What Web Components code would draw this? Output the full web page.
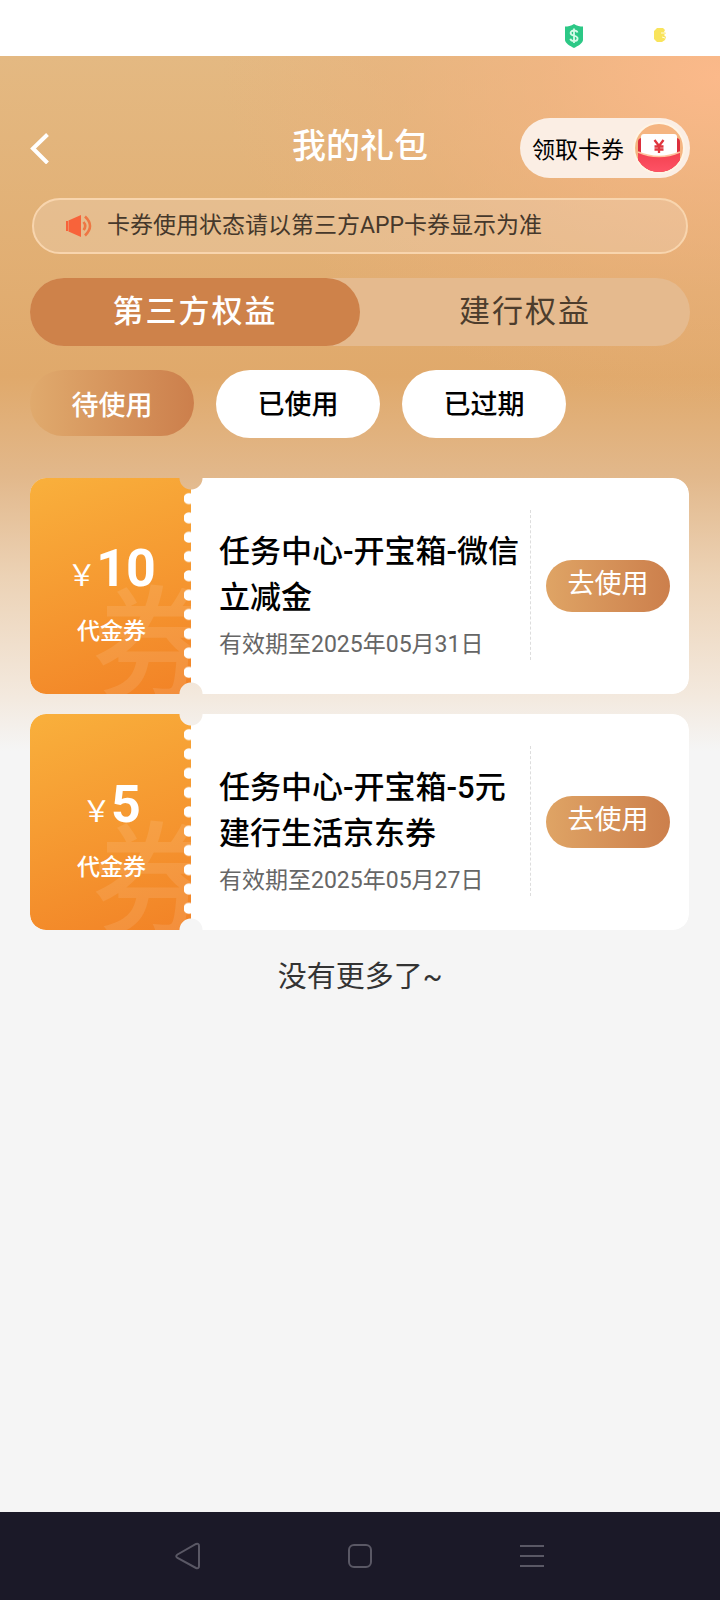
<!DOCTYPE html>
<html lang="zh-CN">
<head>
<meta charset="utf-8">
<meta name="viewport" content="width=device-width, initial-scale=1">
<title>我的礼包</title>
<style>
html, body { margin: 0; }
body { font-family: Roboto, "Noto Sans CJK SC", sans-serif; font-size: 23px; color: #000; background: #f5f5f5; }
</style>
</head>
<body>
<gift-page></gift-page>
<script>
class Base extends HTMLElement {
  connectedCallback() {
    if (this.shadowRoot) return;
    this.attachShadow({ mode: 'open' }).innerHTML =
      '<style>*{box-sizing:border-box}button{font:inherit;color:inherit;border:0;margin:0;padding:0;background:none;cursor:pointer}svg{display:block}</style>' + this.render();
  }
}

customElements.define('status-bar', class extends Base {
  render() { return `
    <style>
      :host { display: flex; justify-content: flex-end; align-items: flex-end; height: 56px; gap: 70px; padding: 0 54px 8px 0; background: #fff; box-sizing: border-box; }
      .bat { margin-bottom: 6px; }
    </style>
    <svg width="20" height="24" viewBox="0 0 20 24" aria-hidden="true"><path d="M10 0C7 2 4 2.500 1 2.500V16c0 3 5 6 9 8 4-2 9-5 9-8V2.500C16 2.500 13 2 10 0z" fill="#2cc886"/><path d="M13.500 8.500c-.5-1.500-1.800-2-3.500-2-2 0-3.400.9-3.400 2.600 0 3.600 7 1.700 7 5.300 0 1.700-1.500 2.600-3.600 2.600-1.900 0-3.300-.7-3.700-2.300M10 4.500v14.500" fill="none" stroke="#d6fbe8" stroke-width="1.800"/></svg>
    <svg class="bat" width="12" height="14" viewBox="0 0 12 14" aria-hidden="true"><path d="M3 0h6l2 2-1 2 2 1-2 2 2 2-1 3-3 2H3L0 11V3z" fill="#f9e45c"/><path d="M7 5h4M8 9l3 1" stroke="#fffbe0" stroke-width="1"/></svg>`; }
});

customElements.define('page-header', class extends Base {
  render() { return `
    <style>
      :host { display: grid; grid-template-columns: 1fr auto 1fr; align-items: center; height: 60px; }
      .back { width: 20px; height: 32px; justify-self: start; }
      h1 { margin: 0 0 4px; font-size: 34px; line-height: 44px; font-weight: 500; color: #fff; }
      .claim { justify-self: end; display: flex; align-items: center; justify-content: space-between; width: 170px; height: 60px; padding: 0 5px 0 12px; border-radius: 30px; background: #fbeee4; font-size: 23px; color: #000; }
    </style>
    <button class="back" aria-label="返回"><svg width="20" height="32" viewBox="0 0 20 32"><path d="M17.500 2.500 3 16.500 17.500 31" fill="none" stroke="#fff" stroke-width="4"/></svg></button>
    <h1>我的礼包</h1>
    <button class="claim"><span>领取卡券</span>
      <svg width="52" height="52" viewBox="0 0 52 52" aria-hidden="true">
        <defs><linearGradient id="r" x1="0" y1="0" x2="0" y2="1"><stop offset="0" stop-color="#f3414f"/><stop offset="1" stop-color="#ff5468"/></linearGradient><clipPath id="c"><circle cx="26" cy="26" r="24"/></clipPath></defs>
        <circle cx="26" cy="26" r="26" fill="#fff4e4"/><circle cx="26" cy="26" r="24" fill="#f5b581"/>
        <g clip-path="url(#c)"><path d="M5 20q0-4 4-4h34q4 0 4 4v32H5z" fill="#dc2f3d"/><rect x="8" y="12" width="36" height="26" rx="3" fill="#fff"/><path d="M5 30q21 9 42 0v22H5z" fill="url(#r)"/><path d="M5 30q21 9 42 0" fill="none" stroke="#ffc4a0" stroke-width="1.500"/></g>
        <path d="m21.500 18 4.500 6 4.500-6M26 24v7M21.500 24.500h9M21.500 27.500h9" fill="none" stroke="#e0363f" stroke-width="2.300"/>
      </svg></button>`; }
});

customElements.define('notice-bar', class extends Base {
  render() { return `
    <style>
      :host { display: flex; align-items: center; gap: 15px; height: 56px; margin: 0 2px; padding: 0 32px; border: 2px solid #f8d5ae; border-radius: 28px; background: rgba(240,220,200,.3); font-size: 23px; color: #45382b; box-sizing: border-box; }
      span { line-height: 32px; }
    </style>
    <svg width="26" height="22" viewBox="0 0 26 22" aria-hidden="true"><path d="M0 6h2v10H0zM2.500 5.500 15 0v22L2.500 16.500z" fill="#f8633a"/><path d="M17.500 7q3.500 4 0 8M19 1.500q10 9.500 0 19" fill="none" stroke="#ee7744" stroke-width="2.600"/></svg>
    <span><slot></slot></span>`; }
});

customElements.define('benefit-tabs', class extends Base {
  render() { return `
    <style>
      :host { display: grid; grid-template-columns: 1fr 1fr; height: 68px; border-radius: 34px; background: #e5ba8e; }
      button { font-size: 31px; letter-spacing: 2px; padding-bottom: 8px; color: #4d3d2d; border-radius: 34px; }
      [aria-selected=true] { background: #ce824a; color: #fff; font-weight: 500; }
    </style>
    <button role="tab" aria-selected="true">第三方权益</button><button role="tab" aria-selected="false">建行权益</button>`; }
});

customElements.define('status-filter', class extends Base {
  render() { return `
    <style>
      :host { display: flex; gap: 22px; align-items: flex-start; }
      button { width: 164px; height: 68px; padding-bottom: 4px; border-radius: 34px; background: #fff; font-size: 27px; font-weight: 500; }
      [aria-pressed=true] { height: 66px; padding: 0; background: linear-gradient(90deg, #e0aa6d, #cc7f4c); color: #fff; }
    </style>
    <button aria-pressed="true">待使用</button><button aria-pressed="false">已使用</button><button aria-pressed="false">已过期</button>`; }
});

customElements.define('coupon-card', class extends Base {
  render() { return `
    <style>
      :host { display: grid; grid-template-columns: 161px 1fr 159px; height: 216px; border-radius: 16px; background: #fff; position: relative;
        -webkit-mask: radial-gradient(circle at 161px 0, #0000 11px, #000 12px) top / 100% 50% no-repeat, radial-gradient(circle at 161px 100%, #0000 11px, #000 12px) bottom / 100% 50% no-repeat; }
      .value { position: relative; overflow: hidden; display: flex; flex-direction: column; align-items: center; padding: 60px 0 0 2px; border-radius: 16px 0 0 16px; background: linear-gradient(160deg, #f9b03c, #f28226); color: #fff; }
      .teeth { position: absolute; right: 0; top: 11px; width: 7px; height: 193px; background: radial-gradient(circle at 5px 50%, #fff 5px, #0000 6px) 0 0 / 7px 19px no-repeat round; }
      .mark { position: absolute; left: 62px; top: 108px; font-size: 124px; line-height: 124px; font-weight: 500; color: rgba(255,255,255,.1); }
      .amount { display: flex; align-items: baseline; line-height: 62px; font-size: 52px; font-weight: 700; }
      .amount small { font-size: 29px; font-weight: 400; }
      .kind { margin-top: 8px; font-size: 23px; line-height: 34px; font-weight: 500; }
      .info { padding: 51px 0 0 28px; }
      h2 { margin: 0; font-size: 31px; line-height: 46px; font-weight: 500; }
      p { margin: 10px 0 0; font-size: 23px; line-height: 28px; color: #666; }
      .go { display: flex; align-items: center; padding-left: 16px; position: relative; }
      .go::before { content: ""; position: absolute; left: 0; top: 32px; height: 150px; border-left: 1px dashed #ddd; }
      .go button { width: 124px; height: 52px; padding-bottom: 10px; border-radius: 26px; background: linear-gradient(90deg, #dfa465, #cc7f4c); color: #fff; font-size: 27px; }
    </style>
    <div class="value"><span class="mark" aria-hidden="true">券</span><div class="amount"><small>&#xFFE5;</small><span>${this.getAttribute('amount')}</span></div><div class="kind">代金券</div><i class="teeth"></i></div>
    <div class="info"><h2><slot></slot></h2><p>有效期至${this.getAttribute('until')}</p></div>
    <div class="go"><button>去使用</button></div>`; }
});

customElements.define('system-nav', class extends Base {
  render() { return `
    <style>
      :host { display: flex; justify-content: center; align-items: center; gap: 132px; height: 88px; background: #1b1928; }
      button { width: 40px; height: 40px; display: grid; place-items: center; }
      path, rect { fill: none; stroke: #5a5865; stroke-width: 2; }
    </style>
    <button aria-label="返回"><svg width="28" height="30" viewBox="0 0 28 30"><path d="M3.500 13.500 22 3q3-1 3 2v20q0 3-3 2L3.500 17q-2.500-1.700 0-3.500z"/></svg></button>
    <button aria-label="主页"><svg width="24" height="24" viewBox="0 0 24 24"><rect x="1" y="1" width="22" height="22" rx="5"/></svg></button>
    <button aria-label="菜单"><svg width="24" height="24" viewBox="0 0 24 24"><path d="M0 2h24M0 12h24M0 22h24"/></svg></button>`; }
});

customElements.define('gift-page', class extends Base {
  render() { return `
    <style>
      :host { display: flex; flex-direction: column; min-height: 100vh; }
      main { flex: 1; display: flex; flex-direction: column; gap: 24px; padding: 62px 30px 0;
        background: radial-gradient(ellipse 500px 330px at 100% 20px, #fbb98a 0, #f6b483a0 35%, #eeb07c60 65%, #eeb07c00 100%) no-repeat, linear-gradient(180deg, #e4b982 0, #e0a96b 320px, #e2b88b 420px, #ecd2b5 520px, #f3e9de 640px, #f5f5f5 695px); }
      page-header { margin-bottom: -4px; }
      .list { display: flex; flex-direction: column; gap: 20px; margin: 16px 1px 0 0; }
      .end { margin: 0; text-align: center; font-size: 29px; line-height: 46px; color: #333; }
    </style>
    <status-bar></status-bar>
    <main>
      <page-header></page-header>
      <notice-bar>卡券使用状态请以第三方APP卡券显示为准</notice-bar>
      <benefit-tabs role="tablist"></benefit-tabs>
      <status-filter></status-filter>
      <div class="list">
        <coupon-card amount="10" until="2025年05月31日">任务中心-开宝箱-微信立减金</coupon-card>
        <coupon-card amount="5" until="2025年05月27日">任务中心-开宝箱-5元建行生活京东券</coupon-card>
      </div>
      <p class="end">没有更多了~</p>
    </main>
    <system-nav></system-nav>`; }
});
</script>
</body>
</html>
